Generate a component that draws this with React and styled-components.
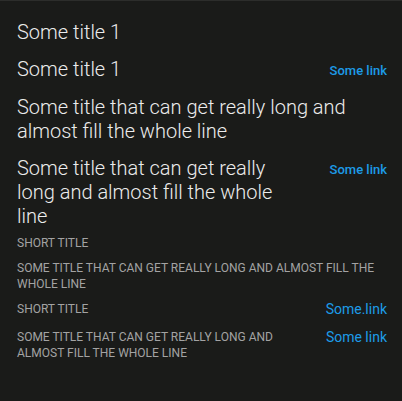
import React from "react";
import styled, { createGlobalStyle } from "styled-components";

const GlobalStyle = createGlobalStyle`
    html, body {
        margin: 0;
        padding: 0;
        background: #1a1b19;
    }
    body {
        font-family: Roboto, "Noto Sans", sans-serif;
    }
`;

const Screen = styled.div`
    width: 402px;
    height: 401px;
    box-sizing: border-box;
    background: #1a1b19;
    border-top: 1px solid #2c2d2b;
    padding: 19px 15px 0 17px;
    display: flex;
    flex-direction: column;
`;

const Row = styled.div`
    display: flex;
    align-items: flex-start;
    justify-content: space-between;
    gap: 24px;
    margin-top: ${({ $gap }) => $gap || 0}px;
`;

const Title = styled.div`
    font-size: 20px;
    font-weight: 300;
    line-height: 24px;
    color: #ececec;
    max-width: ${({ $narrow }) => ($narrow ? "285px" : "none")};
`;

const SmallTitle = styled.div`
    font-size: 12px;
    font-weight: 400;
    line-height: 16px;
    text-transform: uppercase;
    color: #a3a3a3;
    max-width: ${({ $narrow }) => ($narrow ? "275px" : "none")};
    padding-top: ${({ $pad }) => $pad || 0}px;
`;

const Link = styled.a`
    flex-shrink: 0;
    color: #1d9be8;
    text-decoration: none;
    cursor: pointer;
    font-size: ${({ $big }) => ($big ? "14px" : "13px")};
    font-weight: ${({ $big }) => ($big ? 400 : 500)};
    line-height: ${({ $big }) => ($big ? "20px" : "24px")};
    padding-top: ${({ $big }) => ($big ? 0 : 2)}px;
`;

const App = () => {
    return (
        <>
            <GlobalStyle />
            <Screen>
                <Row>
                    <Title>Some title 1</Title>
                </Row>
                <Row $gap={13}>
                    <Title>Some title 1</Title>
                    <Link>Some link</Link>
                </Row>
                <Row $gap={12}>
                    <Title>Some title that can get really long and almost fill the whole line</Title>
                </Row>
                <Row $gap={13}>
                    <Title $narrow>Some title that can get really long and almost fill the whole line</Title>
                    <Link>Some link</Link>
                </Row>
                <Row $gap={7}>
                    <SmallTitle>Short title</SmallTitle>
                </Row>
                <Row $gap={9}>
                    <SmallTitle>Some title that can get really long and almost fill the whole line</SmallTitle>
                </Row>
                <Row $gap={7}>
                    <SmallTitle $pad={2}>Short title</SmallTitle>
                    <Link $big>Some.link</Link>
                </Row>
                <Row $gap={8}>
                    <SmallTitle $narrow $pad={2}>
                        Some title that can get really long and almost fill the whole line
                    </SmallTitle>
                    <Link $big>Some link</Link>
                </Row>
            </Screen>
        </>
    );
};

export default App;
